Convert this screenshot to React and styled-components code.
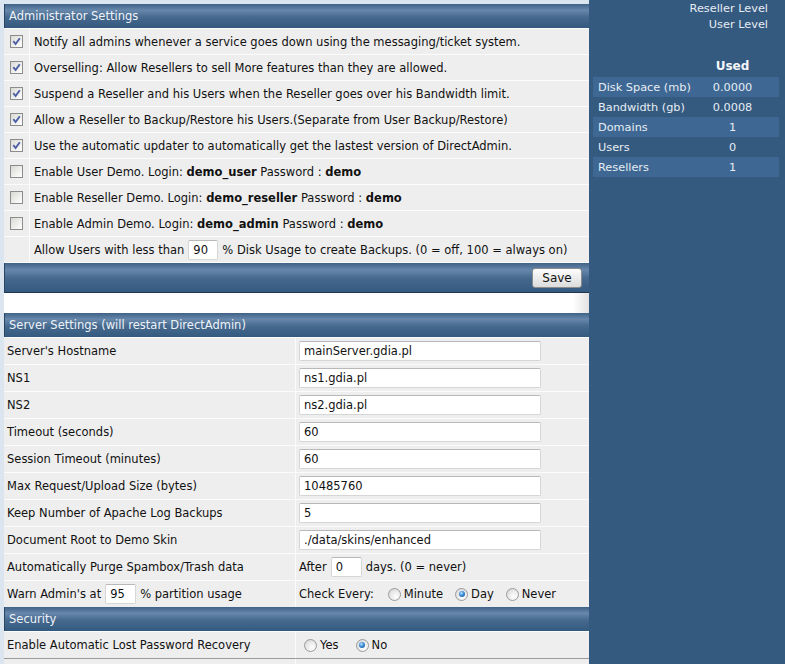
import React from 'react'
import styled, { createGlobalStyle, css } from 'styled-components'

const GlobalStyle = createGlobalStyle`
    html, body {
        margin: 0;
        padding: 0;
        background: #dbe5f0;
    }
    body {
        font-family: "DejaVu Sans", Verdana, sans-serif;
        font-size: 11.5px;
        color: #111;
    }
`

const adminOptions = [
    { checked: true, text: 'Notify all admins whenever a service goes down using the messaging/ticket system.' },
    { checked: true, text: 'Overselling: Allow Resellers to sell More features than they are allowed.' },
    { checked: true, text: 'Suspend a Reseller and his Users when the Reseller goes over his Bandwidth limit.' },
    { checked: true, text: 'Allow a Reseller to Backup/Restore his Users.(Separate from User Backup/Restore)' },
    { checked: true, text: 'Use the automatic updater to automatically get the lastest version of DirectAdmin.' },
    { checked: false, login: 'User', user: 'demo_user' },
    { checked: false, login: 'Reseller', user: 'demo_reseller' },
    { checked: false, login: 'Admin', user: 'demo_admin' },
]

const serverFields = [
    { label: "Server's Hostname", value: 'mainServer.gdia.pl' },
    { label: 'NS1', value: 'ns1.gdia.pl' },
    { label: 'NS2', value: 'ns2.gdia.pl' },
    { label: 'Timeout (seconds)', value: '60' },
    { label: 'Session Timeout (minutes)', value: '60' },
    { label: 'Max Request/Upload Size (bytes)', value: '10485760' },
    { label: 'Keep Number of Apache Log Backups', value: '5' },
    { label: 'Document Root to Demo Skin', value: './data/skins/enhanced' },
]

const usage = [
    { label: 'Disk Space (mb)', value: '0.0000' },
    { label: 'Bandwidth (gb)', value: '0.0008' },
    { label: 'Domains', value: '1' },
    { label: 'Users', value: '0' },
    { label: 'Resellers', value: '1' },
]

function CheckBox({ checked }) {
    return (
        <Check>
            {checked && (
                <svg width="11" height="11" viewBox="0 0 11 11">
                    <path d="M2.3 5.2 L4.6 8 L8.8 2.2" fill="none" stroke="#4b5ea6" strokeWidth="1.9" />
                </svg>
            )}
        </Check>
    )
}

function RadioOption({ on, children }) {
    return (
        <RadioLabel>
            <Radio $on={on} />
            {children}
        </RadioLabel>
    )
}

function App() {
    return (
        <>
            <GlobalStyle />
            <Page>
                <Main>
                    <Header>Administrator Settings</Header>
                    {adminOptions.map((o, i) => (
                        <AdminRow key={i}>
                            <CheckCell>
                                <CheckBox checked={o.checked} />
                            </CheckCell>
                            <TextCell>
                                {o.text ? o.text : (
                                    <>Enable {o.login} Demo. Login:&nbsp;<b>{o.user}</b>&nbsp;Password :&nbsp;<b>demo</b></>
                                )}
                            </TextCell>
                        </AdminRow>
                    ))}
                    <AdminRow $last>
                        <CheckCell />
                        <TextCell>
                            Allow Users with less than <SmallInput defaultValue="90" $w={30} /> % Disk Usage to create Backups. (0 = off, 100 = always on)
                        </TextCell>
                    </AdminRow>
                    <SaveBar>
                        <SaveButton>Save</SaveButton>
                    </SaveBar>
                    <Spacer />

                    <Header>Server Settings (will restart DirectAdmin)</Header>
                    {serverFields.map((f) => (
                        <FieldRow key={f.label}>
                            <LabelCell>{f.label}</LabelCell>
                            <ValueCell>
                                <TextInput defaultValue={f.value} />
                            </ValueCell>
                        </FieldRow>
                    ))}
                    <FieldRow>
                        <LabelCell>Automatically Purge Spambox/Trash data</LabelCell>
                        <ValueCell>
                            After <SmallInput defaultValue="0" $w={31} /> days. (0 = never)
                        </ValueCell>
                    </FieldRow>
                    <FieldRow>
                        <LabelCell>
                            Warn Admin's at <SmallInput defaultValue="95" $w={31} /> % partition usage
                        </LabelCell>
                        <ValueCell>
                            <span>Check Every:</span>
                            <Radios $gap={12} $lead={14}>
                                <RadioOption>Minute</RadioOption>
                                <RadioOption on>Day</RadioOption>
                                <RadioOption>Never</RadioOption>
                            </Radios>
                        </ValueCell>
                    </FieldRow>

                    <Header>Security</Header>
                    <FieldRow>
                        <LabelCell>Enable Automatic Lost Password Recovery</LabelCell>
                        <ValueCell>
                            <Radios $gap={17} $lead={5}>
                                <RadioOption>Yes</RadioOption>
                                <RadioOption on>No</RadioOption>
                            </Radios>
                        </ValueCell>
                    </FieldRow>
                    <FieldRow $cut>
                        <LabelCell />
                        <ValueCell />
                    </FieldRow>
                </Main>

                <Side>
                    <Level>Reseller Level</Level>
                    <Level>User Level</Level>
                    <UsageTable>
                        <UsageHead>
                            <span />
                            <span>Used</span>
                        </UsageHead>
                        {usage.map((u, i) => (
                            <UsageRow key={u.label} $light={i % 2 === 0}>
                                <UsageLabel>{u.label}</UsageLabel>
                                <UsageValue>{u.value}</UsageValue>
                            </UsageRow>
                        ))}
                    </UsageTable>
                </Side>
            </Page>
        </>
    )
}

export default App

const Page = styled.div`
    display: flex;
    width: 785px;
    height: 664px;
    overflow: hidden;
`

const Main = styled.div`
    width: 585px;
    padding: 4px 0 0 4px;
    flex-shrink: 0;
    background: #dbe5f0;
`

const Header = styled.div`
    height: 24px;
    box-sizing: border-box;
    display: flex;
    align-items: center;
    padding-left: 4px;
    color: #eef3f8;
    background: linear-gradient(to bottom, #3f6287 0%, #6788ab 26%, #46698e 55%, #355a7f 100%);
    border-left: 1px solid #2a4563;
`

const AdminRow = styled.div`
    display: flex;
    height: 26px;
    box-sizing: border-box;
    background: #eeeeee;
    border-top: 1px solid #fbfbfb;
    ${p => p.$last && css`
        height: 27px;
        border-bottom: 1px solid #fbfbfb;
    `}
`

const CheckCell = styled.div`
    width: 26px;
    flex-shrink: 0;
    display: flex;
    align-items: center;
    justify-content: center;
    border-right: 1px solid #fbfbfb;
    box-sizing: border-box;
`

const TextCell = styled.div`
    display: flex;
    align-items: center;
    padding-left: 4px;
    white-space: nowrap;
`

const Check = styled.span`
    display: inline-flex;
    align-items: center;
    justify-content: center;
    width: 13px;
    height: 13px;
    box-sizing: border-box;
    border: 1px solid #8b8c8c;
    background: linear-gradient(135deg, #d9d9d4 0%, #f4f4f2 70%, #ffffff 100%);
`

const SmallInput = styled.input`
    width: ${p => p.$w}px;
    height: 20px;
    box-sizing: border-box;
    margin: 0 4px;
    padding: 0 4px;
    border: 1px solid #d6d6d6;
    border-top-color: #b8b8b8;
    border-radius: 2px;
    background: #fff;
    font: inherit;
    color: #111;
`

const SaveBar = styled.div`
    height: 30px;
    box-sizing: border-box;
    display: flex;
    align-items: center;
    justify-content: flex-end;
    padding-right: 7px;
    background: linear-gradient(to bottom, #3f6287 0%, #6788ab 24%, #46698e 52%, #355a7f 100%);
    border-bottom: 1px solid #20364e;
    border-left: 1px solid #2a4563;
`

const SaveButton = styled.button`
    width: 50px;
    height: 20px;
    padding: 0;
    font: inherit;
    font-size: 12px;
    color: #111;
    border: 1px solid #8c8c8c;
    border-radius: 3px;
    background: linear-gradient(to bottom, #fdfdfd 0%, #ececec 50%, #dcdcdc 100%);
`

const Spacer = styled.div`
    height: 20px;
    background: linear-gradient(to right, #ffffff 0, #ffffff calc(100% - 16px), #e2e2e2 100%);
`

const FieldRow = styled.div`
    display: flex;
    height: 27px;
    box-sizing: border-box;
    background: #eeeeee;
    border-top: 1px solid #fbfbfb;
    ${p => p.$cut && css`
        border-top: 1px solid #9a9a9a;
    `}
`

const LabelCell = styled.div`
    width: 292px;
    flex-shrink: 0;
    box-sizing: border-box;
    display: flex;
    align-items: center;
    padding-left: 3px;
    white-space: nowrap;
    border-right: 1px solid #fbfbfb;
`

const ValueCell = styled.div`
    flex: 1;
    display: flex;
    align-items: center;
    padding-left: 3px;
    white-space: nowrap;
`

const TextInput = styled.input`
    width: 242px;
    height: 20px;
    box-sizing: border-box;
    padding: 0 4px;
    border: 1px solid #d6d6d6;
    border-top-color: #b8b8b8;
    border-radius: 2px;
    background: #fff;
    font: inherit;
    color: #111;
`

const Radios = styled.div`
    display: flex;
    align-items: center;
    gap: ${p => p.$gap}px;
    margin-left: ${p => p.$lead}px;
`

const RadioLabel = styled.label`
    display: inline-flex;
    align-items: center;
    gap: 3px;
`

const Radio = styled.span`
    position: relative;
    width: 13px;
    height: 13px;
    box-sizing: border-box;
    border-radius: 50%;
    border: 1px solid #9b9b9b;
    background: radial-gradient(circle at 65% 70%, #ffffff 0%, #ececec 45%, #cfcfcf 100%);
    ${p => p.$on && css`
        &::after {
            content: '';
            position: absolute;
            inset: 2.5px;
            border-radius: 50%;
            background: radial-gradient(circle at 40% 35%, #bfe3ff 0%, #3b8bd6 45%, #0f4a8a 100%);
        }
    `}
`

const Side = styled.div`
    flex: 1;
    background: #355a7f;
    color: #e6edf4;
    padding-top: 1px;
    font-size: 11.3px;
`

const Level = styled.div`
    height: 16px;
    line-height: 16px;
    text-align: right;
    padding-right: 17px;
`

const UsageTable = styled.div`
    margin: 24px 6px 0 4px;
`

const UsageHead = styled.div`
    display: grid;
    grid-template-columns: 93px 93px;
    height: 18px;
    align-items: center;
    margin-bottom: 2px;
    font-weight: bold;
    font-size: 12px;
    color: #f4f7fa;
    span {
        text-align: center;
    }
`

const UsageRow = styled.div`
    display: grid;
    grid-template-columns: 93px 93px;
    height: 20px;
    align-items: center;
    background: ${p => (p.$light ? '#3e6893' : 'transparent')};
`

const UsageLabel = styled.span`
    padding-left: 5px;
    white-space: nowrap;
`

const UsageValue = styled.span`
    text-align: center;
`
